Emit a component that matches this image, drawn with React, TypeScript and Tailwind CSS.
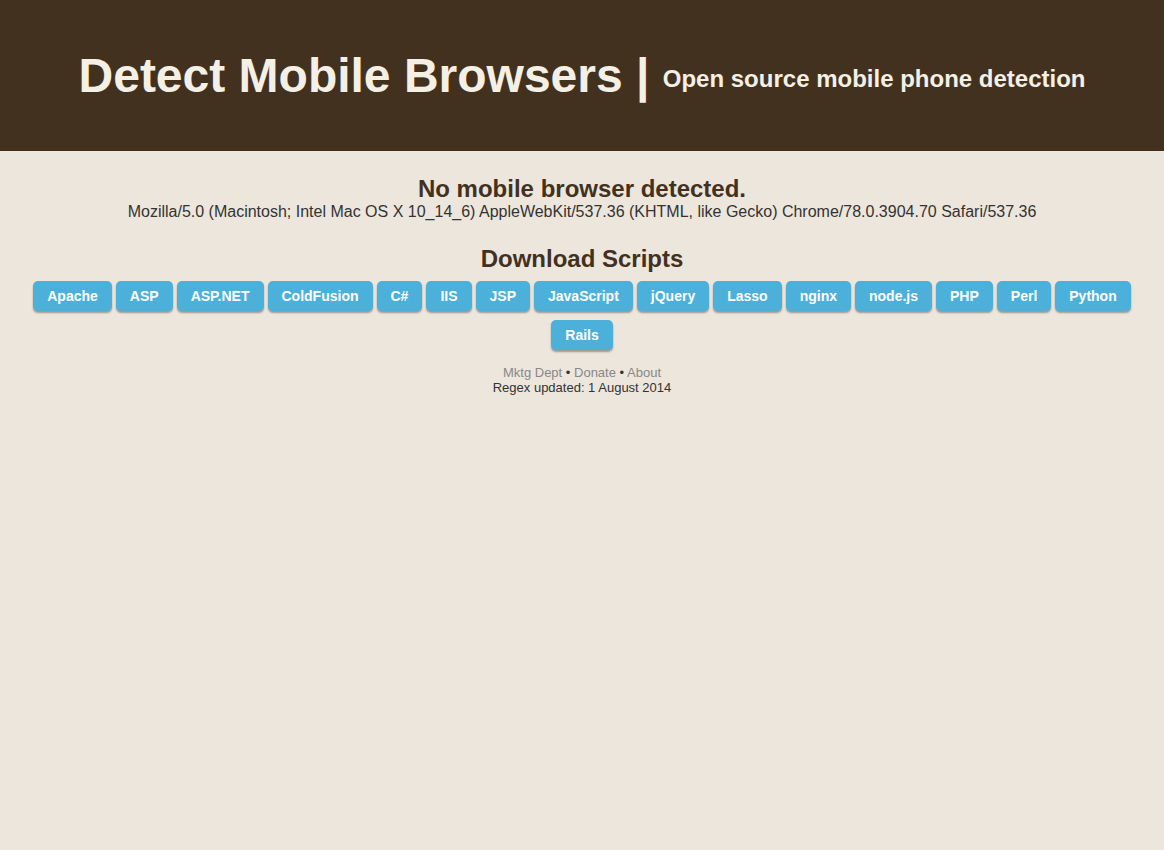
import React from "react";

const langs = [
  "Apache",
  "ASP",
  "ASP.NET",
  "ColdFusion",
  "C#",
  "IIS",
  "JSP",
  "JavaScript",
  "jQuery",
  "Lasso",
  "nginx",
  "node.js",
  "PHP",
  "Perl",
  "Python",
  "Rails",
];

export default function App() {
  return (
    <div
      className="min-h-[850px] bg-[#ede6dc]"
      style={{ fontFamily: '"Liberation Sans", Arial, sans-serif' }}
    >
      <header className="flex h-[151px] items-center justify-center bg-[#43311f]">
        <h1 className="whitespace-pre text-[48px] font-bold leading-[normal] text-[#f4f0e6]">
          {"Detect Mobile Browsers | "}
          <span className="align-middle text-[24px]">Open source mobile phone detection</span>
        </h1>
      </header>
      <main className="flex flex-col items-center pt-[24px] text-center">
        <h2 className="text-[24px] font-bold leading-[normal] text-[#43311f]">
          No mobile browser detected.
        </h2>
        <p className="text-[16px] leading-[normal] text-[#333333]">
          Mozilla/5.0 (Macintosh; Intel Mac OS X 10_14_6) AppleWebKit/537.36 (KHTML, like Gecko) Chrome/78.0.3904.70 Safari/537.36
        </p>
        <h2 className="mt-[24px] text-[24px] font-bold leading-[normal] text-[#43311f]">
          Download Scripts
        </h2>
        <div className="mt-[8px] flex w-full flex-wrap justify-center gap-x-[4px] gap-y-[9px] px-[28px]">
          {langs.map((l) => (
            <a
              key={l}
              href="#"
              className="flex h-[30px] items-center rounded-[5px] bg-[#4bb0da] px-[14px] text-[14px] font-bold text-white shadow-[0_2px_2px_rgba(0,0,0,0.35)]"
            >
              {l}
            </a>
          ))}
        </div>
        <div className="mt-[15px] text-[13px] leading-[normal] text-[#333333]">
          <div>
            <a href="#" className="text-[#888888]">Mktg Dept</a> •{" "}
            <a href="#" className="text-[#888888]">Donate</a> •{" "}
            <a href="#" className="text-[#888888]">About</a>
          </div>
          <div>Regex updated: 1 August 2014</div>
        </div>
      </main>
    </div>
  );
}
